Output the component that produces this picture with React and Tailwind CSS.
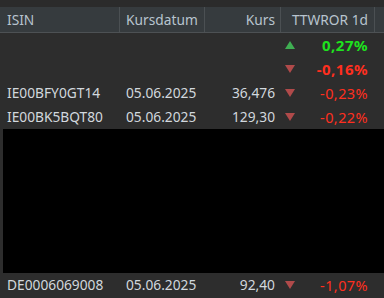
const rows = [
  { isin: '', date: '', kurs: '', dir: 'up', pct: '0,27%', strong: true },
  { isin: '', date: '', kurs: '', dir: 'down', pct: '-0,16%', strong: true },
  { isin: 'IE00BFY0GT14', date: '05.06.2025', kurs: '36,476', dir: 'down', pct: '-0,23%' },
  { isin: 'IE00BK5BQT80', date: '05.06.2025', kurs: '129,30', dir: 'down', pct: '-0,22%' },
]

const last = { isin: 'DE0006069008', date: '05.06.2025', kurs: '92,40', dir: 'down', pct: '-1,07%' }

const cols = 'grid grid-cols-[120px_85px_76px_94px_9px]'

function Arrow({ dir }) {
  return (
    <svg width="10" height="8" viewBox="0 0 10 8" className="shrink-0">
      {dir === 'up' ? (
        <path d="M5 0 L10 8 L0 8 Z" fill="#3fae52" />
      ) : (
        <path d="M0 0 L10 0 L5 8 Z" fill="#b04a4a" />
      )}
    </svg>
  )
}

function Row({ r }) {
  const pctColor = r.dir === 'up' ? 'text-[#1ee21e]' : 'text-[#ff2f1f]'
  return (
    <div className={`${cols} h-6 items-center`}>
      <span className="pl-[7px] text-[#d2d8de]">{r.isin}</span>
      <span className="pl-[6px] text-[#d2d8de]">{r.date}</span>
      <span className="pr-[6px] text-right text-[#d2d8de]">{r.kurs}</span>
      <div className="flex items-center pl-[4px] pr-[7px]">
        <Arrow dir={r.dir} />
        <span
          className={`ml-auto ${pctColor} ${
            r.strong ? 'font-bold text-[15px] tracking-[0.5px]' : 'text-[14.5px] tracking-[0.4px]'
          }`}
        >
          {r.pct}
        </span>
      </div>
      <span />
    </div>
  )
}

export default function App() {
  return (
    <div
      className="w-[384px] h-[298px] overflow-hidden bg-[#2d2d2d] text-[13.75px] leading-none"
      style={{ fontFamily: '"Noto Sans", sans-serif' }}
    >
      <div className="h-[7px] bg-[#2b2b2b]" />
      <div className={`${cols} h-[26px] bg-[#363b3e] border-b border-[#4d5154] text-[#b8c4ce] items-stretch`}>
        <div className="flex items-center pl-[7px] border-r border-[#4b5053]">ISIN</div>
        <div className="flex items-center pl-[6px] border-r border-[#4b5053]">Kursdatum</div>
        <div className="flex items-center justify-end pr-[5px] border-r border-[#4b5053]">Kurs</div>
        <div className="flex items-center justify-end pr-[6px] border-r border-[#4b5053]">TTWROR 1d</div>
        <div />
      </div>
      {rows.map((r, i) => (
        <Row key={i} r={r} />
      ))}
      <div className="ml-[3px] h-[144px] bg-black" />
      <Row r={last} />
    </div>
  )
}
